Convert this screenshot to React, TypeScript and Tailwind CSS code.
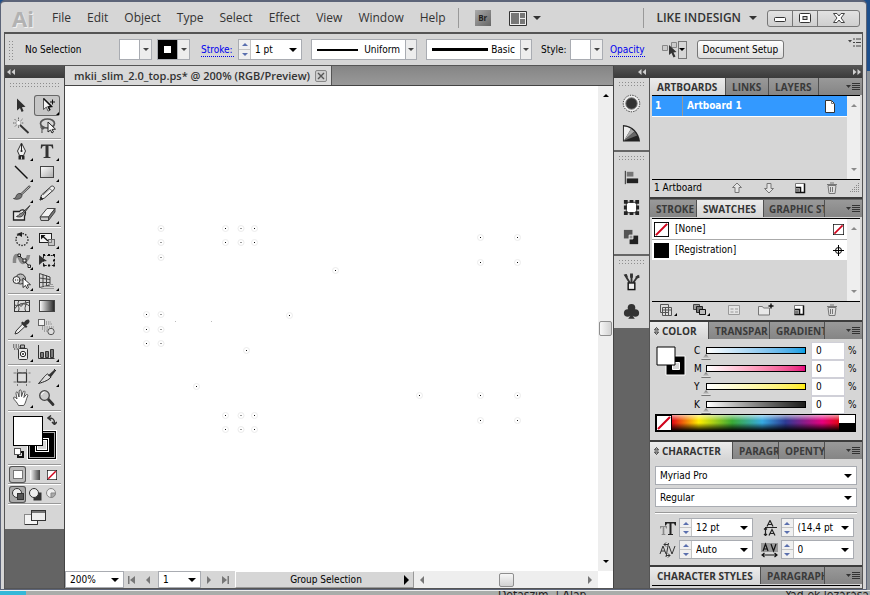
import type { ReactNode } from 'react';

const uiFont = "font-[family-name:'Open_Sans','Noto_Sans',sans-serif]";
const textFont = "font-[family-name:'DejaVu_Sans_Condensed','DejaVu_Sans',sans-serif]";

const menus = ['File', 'Edit', 'Object', 'Type', 'Select', 'Effect', 'View', 'Window', 'Help'];

type Tool = { name: string; flyout?: boolean; active?: boolean; icon: ReactNode };

const toolGroups: Tool[][] = [
  [
    {
      name: 'Selection',
      icon: <path d="M9 3.5v12l3-2.600 1.600 4.100 2-1-1.700-3.700 3.600-.5z" fill="#2f2f2f" />,
    },
    {
      name: 'Group Selection',
      active: true,
      flyout: true,
      icon: (
        <>
          <path d="M9.500 3.500v11l2.800-2.400 1.700 4 2-.9-1.700-3.700 3.200-.5z" fill="#f4f4f4" stroke="#555" />
          <path d="M9.500 3.500l8 8-3.200.5 1.700 3.200" fill="none" stroke="#111" strokeWidth="1.500" />
          <path d="M18.500 4.500v5M16 7h5" stroke="#111" />
        </>
      ),
    },
    {
      name: 'Magic Wand',
      icon: (
        <>
          <path d="M10.500 1.500v11M5 7h11M6.500 3l8 8M14.500 3l-8 8" stroke="#666" strokeDasharray="1.500 .7" />
          <circle cx="10.500" cy="7" r="2" fill="#f5f5f5" />
          <path d="M12 9l8.500 8" stroke="#333" strokeWidth="1.800" />
        </>
      ),
    },
    {
      name: 'Lasso',
      icon: (
        <>
          <ellipse cx="13.500" cy="7.500" rx="7" ry="4.500" fill="none" stroke="#555" strokeWidth="1.700" />
          <path d="M7.500 10c-2 2 2 4 2.500 2s-3-1-2 5" fill="none" stroke="#555" strokeWidth="1.200" />
          <path d="M14 6v10l2.500-2 1.500 3 1.500-1-1.400-2.600 3.400-.2z" fill="#f4f4f4" stroke="#222" />
        </>
      ),
    },
  ],
  [
    {
      name: 'Pen',
      flyout: true,
      icon: (
        <>
          <path d="M13.500 2l-4 8 2 4.500h4l2-4.500z" fill="#eee" stroke="#333" />
          <path d="M13.500 3v7" stroke="#222" />
          <circle cx="13.500" cy="10" r="1.100" fill="#222" />
          <path d="M10.500 14.500h6v4h-6z" fill="#222" />
          <path d="M13.500 15.500v3" stroke="#ccc" />
        </>
      ),
    },
    {
      name: 'Type',
      flyout: true,
      icon: (
        <path
          d="M7 3.500h12l.3 4h-1l-.9-2.300-2.900-.5v11l2 .6v.7H9.500v-.7l2-.6v-11l-2.900.5L7.700 7.500h-1z"
          fill="#333"
        />
      ),
    },
    { name: 'Line Segment', flyout: true, icon: <path d="M7 4l12.500 12.500" stroke="#111" strokeWidth="1.400" /> },
    {
      name: 'Rectangle',
      flyout: true,
      icon: <rect x="6.500" y="4.500" width="13" height="11" fill="url(#light)" stroke="#444" />,
    },
    {
      name: 'Paintbrush',
      flyout: true,
      icon: (
        <>
          <path d="M22 3L12.500 12" stroke="#444" strokeWidth="2.400" />
          <path d="M21.500 3.500L13 11.500" stroke="#ddd" strokeWidth=".8" />
          <path d="M12.500 10.500c-3-.5-4 1.500-4.500 3s-1.500 2-2.500 2c2.500 1.500 8 1 8.500-3z" fill="#777" stroke="#222" strokeWidth=".7" />
        </>
      ),
    },
    {
      name: 'Pencil',
      flyout: true,
      icon: (
        <>
          <path d="M6 17l1.500-5L17 3.500c2-1.500 4.500 1 3 3L10.500 15z" fill="#eee" stroke="#333" />
          <path d="M6 17l1-3 2 2z" fill="#222" stroke="#333" />
          <path d="M15 5l4 3.500M9 12l7-6.500" stroke="#777" />
        </>
      ),
    },
    {
      name: 'Blob Brush',
      icon: (
        <>
          <path d="M5.500 7.500h6c2-3 6-1.500 6 1s-1 3.500-1 4v3.500h-11z" fill="#e8e8e8" stroke="#222" strokeWidth="1.300" />
          <path d="M22 1.500l-8 7.500c-3 0-3 3-5.500 3.500 3 1 6.500.5 7-2.500z" fill="#888" stroke="#222" strokeWidth=".8" />
        </>
      ),
    },
    {
      name: 'Eraser',
      flyout: true,
      icon: (
        <>
          <path d="M6 13l7-8.500h8L14.500 13z" fill="#f2f2f2" stroke="#444" />
          <path d="M6 13h8.500v3.500H7z" fill="#ccc" stroke="#444" />
          <path d="M14.500 16.500V13L21 4.500V8z" fill="#777" stroke="#444" />
        </>
      ),
    },
  ],
  [
    {
      name: 'Rotate',
      flyout: true,
      icon: (
        <>
          <circle cx="14" cy="10.500" r="6" fill="none" stroke="#222" strokeWidth="1.300" strokeDasharray="1.500 1.300" />
          <path d="M8.500 5l5.500-2v5z" fill="#222" />
        </>
      ),
    },
    {
      name: 'Scale',
      flyout: true,
      icon: (
        <>
          <rect x="5.500" y="4.500" width="12" height="9" fill="#f4f4f4" stroke="#222" />
          <rect x="14.500" y="10.500" width="6" height="6" fill="#bbb" fillOpacity=".6" stroke="#666" />
          <path d="M8.500 7l5.500 5" stroke="#111" strokeWidth="1.300" />
          <path d="M7 6h4.500L7 10.500z" fill="#111" />
        </>
      ),
    },
    {
      name: 'Warp',
      flyout: true,
      icon: (
        <>
          <path d="M6.500 13C6 4 10 4 11.500 8s3 6 6 3 3-6 3-6" fill="none" stroke="#888" strokeWidth="3.500" />
          <path d="M11 5l11 12" stroke="#111" />
          <path d="M10 4h2.500v2.500H10zM15 9h3v3h-3zM20 15h2.500v2.500H20z" fill="#eee" stroke="#111" strokeWidth=".9" />
        </>
      ),
    },
    {
      name: 'Free Transform',
      icon: (
        <>
          <path d="M5 5v10l4-3.500 4-.5z" fill="#333" />
          <rect x="9.500" y="5.500" width="11" height="10" fill="none" stroke="#222" strokeDasharray="2 1.600" />
          <path d="M9 4h2v2H9zM14 4h2v2h-2zM19 4h2v2h-2zM19 9.500h2v2h-2zM19 14.500h2v2h-2zM14 14.500h2v2h-2zM9 14.500h2v2H9z" fill="#111" />
        </>
      ),
    },
    {
      name: 'Shape Builder',
      flyout: true,
      icon: (
        <>
          <circle cx="12.500" cy="8" r="5" fill="#bbb" stroke="#333" />
          <circle cx="8.500" cy="9" r="3.500" fill="#eee" stroke="#333" />
          <path d="M7 9h9" stroke="#111" strokeDasharray="1 1.200" />
          <path d="M15 7v9.500l2.500-2 1.500 3 1.500-1-1.400-2.600 3.400-.2z" fill="#fff" stroke="#222" strokeWidth=".9" />
        </>
      ),
    },
    {
      name: 'Perspective Grid',
      flyout: true,
      icon: (
        <>
          <path d="M5.500 2.500v14M9 3.500v12M12.500 4.500v10.500M16 6v8M5.500 2.500l10.500 3.500M5.500 7l10.500 1.500M5.500 11.500h10.500M5.500 16.500l10.500-2.500" fill="none" stroke="#444" />
          <path d="M10 15.500h10M14 13.500h5M7 17.500h13" stroke="#999" />
        </>
      ),
    },
  ],
  [
    {
      name: 'Mesh',
      icon: (
        <>
          <rect x="6.500" y="4.500" width="15" height="11" fill="#ddd" stroke="#333" />
          <path d="M6.500 9c5 2 9-4 15 1M11 4.500c-3 5 2 7-1 11M17 4.500c3 4-2 7 1 11M6.500 13c4-6 8-5 15-7" fill="none" stroke="#444" />
          <circle cx="13" cy="9" r="1.200" fill="#fff" stroke="#444" />
        </>
      ),
    },
    {
      name: 'Gradient',
      icon: <rect x="5.500" y="4.500" width="15" height="11" fill="url(#dark)" stroke="#444" />,
    },
    {
      name: 'Eyedropper',
      flyout: true,
      icon: (
        <>
          <path d="M7 17l1-3 6.500-7 2.500 2.500-7 6.500z" fill="#eee" stroke="#333" />
          <path d="M13 6l5 5 1.500-1.500-1.500-1.500c4-1.500 4-4 3-5s-3.500 0-5 2.500L14.500 4.500z" fill="#333" />
        </>
      ),
    },
    {
      name: 'Blend',
      icon: (
        <>
          <rect x="4.500" y="2.500" width="6" height="6" fill="#f2f2f2" stroke="#666" />
          <path d="M12 5h5M12 7h6M8 10h12M8 12h6M10 14h4" stroke="#666" strokeDasharray="1 1.300" />
          <circle cx="17" cy="14.500" r="3.200" fill="#ddd" stroke="#555" />
        </>
      ),
    },
  ],
  [
    {
      name: 'Symbol Sprayer',
      flyout: true,
      icon: (
        <>
          <path d="M5 3h6M5 5h7M6 7h4" stroke="#222" strokeWidth="1.200" strokeDasharray="1.300 1.300" />
          <path d="M12.500 3h4v3h-4z" fill="#bbb" stroke="#333" />
          <rect x="10.500" y="6.500" width="9" height="11" rx="1" fill="#e8e8e8" stroke="#333" />
          <circle cx="15" cy="12" r="2.700" fill="#fff" stroke="#222" />
          <circle cx="15" cy="12" r="1" fill="#222" />
        </>
      ),
    },
    {
      name: 'Column Graph',
      flyout: true,
      icon: (
        <>
          <path d="M4.500 3v13.500h16" fill="none" stroke="#333" />
          <path d="M6.500 10.500h3v5h-3zM11.500 9.500h3v6h-3zM16.500 7.500h3v8h-3z" fill="#777" stroke="#333" />
        </>
      ),
    },
  ],
  [
    {
      name: 'Artboard',
      icon: (
        <>
          <path d="M9.500 2v17M18.500 2v17M5.500 6h17M5.500 15h17" stroke="#777" strokeDasharray="3 2" />
          <rect x="9.500" y="6" width="9" height="9" fill="#ddd" stroke="#333" strokeWidth="1.200" />
        </>
      ),
    },
    {
      name: 'Slice',
      flyout: true,
      icon: (
        <>
          <path d="M4.500 16.500C8 13 11 8 13.500 7l3.500 3c-2 3-7 5-12.500 6.500z" fill="#ddd" stroke="#222" />
          <path d="M14 8.500l6-5.500 2 .5L17 10z" fill="#333" />
          <path d="M20 2l2 2" stroke="#222" />
        </>
      ),
    },
    {
      name: 'Hand',
      flyout: true,
      icon: (
        <path
          d="M10.500 17.500c-1-3-5-6-5-7.500s2-1 3.500 1L8 5.500c-.3-2 1.500-2 2-.3l1 3.800.2-6c.2-1.500 2-1.500 2 0l.3 5.500 1.600-4.600c.6-1.500 2.200-1 1.800.6l-1 5 2-2.500c1-1.200 2.500-.3 1.800 1-1.700 3-1.500 6.500-4 9.500z"
          fill="#fff"
          stroke="#444"
          strokeWidth=".9"
        />
      ),
    },
    {
      name: 'Zoom',
      icon: (
        <>
          <path d="M14 11l5 5.500" stroke="#333" strokeWidth="2.800" strokeLinecap="round" />
          <circle cx="10.500" cy="7.500" r="4.800" fill="#ccc" stroke="#444" strokeWidth="1.300" />
          <path d="M7.500 7a3.500 3.500 0 013-3" stroke="#fff" fill="none" />
        </>
      ),
    },
  ],
];

const Caret = ({ className = '' }: { className?: string }) => (
  <svg viewBox="0 0 8 4" className={`h-1 w-2 shrink-0 ${className}`} aria-hidden="true">
    <path d="M0 0h8L4 4z" fill="currentColor" />
  </svg>
);

const SmallCaret = ({ up }: { up?: boolean }) => (
  <svg viewBox="0 0 6 3" className={`block h-[3px] w-[6px] shrink-0 ${up ? 'rotate-180' : ''}`} aria-hidden="true">
    <path d="M0 0h6L3 3z" fill="currentColor" />
  </svg>
);

const Grip = () => (
  <div className="h-[5px] bg-[radial-gradient(circle,#8d8d8d_0.8px,transparent_1px)] bg-[length:3px_3px]" />
);

const FoldArrows = ({ right }: { right?: boolean }) => (
  <button aria-label="Collapse" className={right ? 'rotate-180' : ''}>
    <svg viewBox="0 0 8 6" className="h-[6px] w-2" fill="#d0d0d0">
      <path d="M3.500 0v6L0 3zM8 0v6L4.500 3z" />
    </svg>
  </button>
);

type ComboProps = { label: string; value: string; className?: string; boxed?: boolean; children?: ReactNode };

function Combo({ label, value, className = '', boxed, children }: ComboProps) {
  return (
    <div className={`flex items-center border border-[#a9acb2] bg-white ${className}`}>
      {children}
      <select
        aria-label={label}
        className={`h-full min-w-0 flex-1 appearance-none bg-transparent outline-none ${boxed ? 'pr-[5px] text-right' : 'pl-1'}`}
      >
        <option>{value}</option>
      </select>
      <span
        className={`pointer-events-none flex h-full items-center justify-center ${
          boxed ? 'w-[11px] border-l border-[#a9acb2] bg-[#ededed] text-[#444]' : 'w-4 text-black'
        }`}
      >
        {boxed ? <SmallCaret /> : <Caret />}
      </span>
    </div>
  );
}

const Stepper = ({ label }: { label: string }) => (
  <span className="flex h-full w-[12px] shrink-0 flex-col border-r border-[#c4c4c4] bg-[#f0f0f0] text-[#5a6fae]">
    <button aria-label={`Increase ${label}`} className="flex flex-1 items-center justify-center border-b border-[#c4c4c4]">
      <SmallCaret up />
    </button>
    <button aria-label={`Decrease ${label}`} className="flex flex-1 items-center justify-center">
      <SmallCaret />
    </button>
  </span>
);

const MenuIcon = () => (
  <svg viewBox="0 0 14 8" className="h-2 w-[14px]">
    <path d="M0 2h5L2.500 5z" fill="#333" />
    <path d="M6 .5h8M6 2.500h8M6 4.500h8M6 6.500h8" stroke="#333" />
  </svg>
);

type Tab = { name: string; className: string; active?: boolean; fold?: boolean };

function PanelTabs({ tabs }: { tabs: Tab[] }) {
  return (
    <div className={`flex h-[17px] bg-linear-to-b from-[#999] to-[#858585] ${uiFont}`}>
      {tabs.map((tab) => (
        <button
          key={tab.name}
          className={`flex items-center overflow-hidden border-r border-[#505050] text-[10px] font-bold whitespace-nowrap ${
            tab.active ? 'bg-linear-to-b from-[#ececec] to-[#d6d6d6] text-[#333]' : 'text-[#3a3a3a]'
          } ${tab.className}`}
        >
          {tab.fold && (
            <svg viewBox="0 0 5 8" className="mr-[3px] h-2 w-[5px] shrink-0" fill="none" stroke="#333">
              <path d="M.5 3l2-2.500 2 2.500zM.5 5l2 2.500L4.500 5z" />
            </svg>
          )}
          {tab.name}
        </button>
      ))}
      <button aria-label="Panel menu" className="ml-auto pr-[2px]">
        <MenuIcon />
      </button>
    </div>
  );
}

const ListScroll = () => (
  <div className="flex w-[13px] flex-col items-center justify-between bg-[#eee] py-2 text-[#8a8a8a]">
    <button aria-label="Scroll up">
      <SmallCaret up />
    </button>
    <button aria-label="Scroll down">
      <SmallCaret />
    </button>
  </div>
);

const NoneSwatch = ({ className }: { className: string }) => (
  <svg viewBox="0 0 16 16" className={className}>
    <rect x=".5" y=".5" width="15" height="15" fill="#fff" stroke="#000" />
    <path d="M2 14L14 2" stroke="#d0021b" strokeWidth="2.200" />
  </svg>
);

const IconButton = ({ label, children }: { label: string; children: ReactNode }) => (
  <button aria-label={label}>
    <svg viewBox="0 0 18 14" className="h-[14px] w-[18px]" fill="none" stroke="#444">
      {children}
    </svg>
  </button>
);

const newPage = (
  <>
    <path d="M4.500 2.500h9v9h-9z" fill="#fff" stroke="#777" />
    <path d="M13.500 2.500v9h-9" stroke="#111" strokeWidth="1.500" />
    <path d="M5 6.500h4.500v4.500" stroke="#111" strokeWidth="1.500" />
    <path d="M5 7.500h3.500v3.500H5z" fill="#777" stroke="none" />
  </>
);

const trash = (
  <>
    <path d="M5 4.500h8l-1 8H6z" fill="#ddd" stroke="#777" />
    <path d="M4 3.500h10M7 2h4M7.500 6v5M9.500 6v5" stroke="#777" />
  </>
);

const MenuBar = () => (
  <header className={`flex h-[30px] items-center border-b-2 border-[#555] pr-[3px] text-[#333] ${uiFont}`}>
    <span className="w-12 pl-2 text-[22px] leading-none font-bold text-[#b2b2b2] [text-shadow:1px_1px_0_#f0f0f0]">Ai</span>
    <nav className="flex gap-4 text-[12px]">
      {menus.map((menu) => (
        <button key={menu}>{menu}</button>
      ))}
    </nav>
    <div className="ml-3 flex items-center border-l border-[#999] py-[2px] pl-4">
      <button className="h-4 w-4 bg-linear-to-br from-[#aaa] to-[#666] text-[8px] font-bold text-[#222]">Br</button>
      <button aria-label="Arrange documents" className="ml-[18px] flex items-center gap-[6px]">
        <svg viewBox="0 0 18 15" className="h-[15px] w-[18px]">
          <path d="M.5.5h17v14H.5z" fill="#eee" stroke="#333" />
          <path d="M2 2h8v11H2zM11 2h5v5h-5zM11 8h5v5h-5z" fill="#777" />
        </svg>
        <Caret />
      </button>
    </div>
    <div className="ml-auto flex items-center border-l border-[#999] py-[2px] pl-3">
      <button className="flex items-center gap-2 text-[12px] leading-4 font-semibold whitespace-nowrap">
        LIKE INDESIGN
        <Caret />
      </button>
    </div>
    <div className="ml-[10px] flex h-[17px] rounded-[3px] border border-[#777] bg-linear-to-b from-[#e2e2e2] to-[#cfcfcf]">
      <button aria-label="Minimize" className="flex w-[25px] items-center justify-center border-r border-[#777]">
        <svg viewBox="0 0 12 5" className="mt-[3px] h-[5px] w-3">
          <rect x=".5" y=".5" width="11" height="4" rx="1" fill="#fff" stroke="#333" />
        </svg>
      </button>
      <button aria-label="Restore" className="flex w-[25px] items-center justify-center border-r border-[#777]">
        <svg viewBox="0 0 12 10" className="h-[10px] w-3">
          <rect x=".5" y=".5" width="11" height="9" rx="1" fill="#fff" stroke="#333" />
          <rect x="4" y="3.500" width="4" height="3" fill="#ccc" stroke="#333" />
        </svg>
      </button>
      <button aria-label="Close" className="flex w-[41px] items-center justify-center">
        <svg viewBox="0 0 12 10" className="h-[10px] w-3">
          <path d="M.5.500h3.500L6 3 8 .5h3.500L8 5l3.500 4.500H8L6 7 4 9.500H.5L4 5z" fill="#fff" stroke="#444" />
        </svg>
      </button>
    </div>
  </header>
);

const ColorPick = ({ label, stroke }: { label: string; stroke?: boolean }) => (
  <button aria-label={label} className="flex h-[21px] w-[33px] border border-[#a9acb2] bg-white">
    <span className="flex h-full flex-1 items-center justify-center">
      {stroke && <span className="h-[17px] w-[17px] border-[5px] border-black bg-white outline-1 outline-black" />}
    </span>
    <span className="flex h-full w-[12px] items-center justify-center border-l border-[#a9acb2] bg-[#ededed] text-[#444]">
      <SmallCaret />
    </span>
  </button>
);

const linkStyle = 'border-b border-dotted border-[#0000ee] leading-[13px] text-[#0000ee]';

const ControlBar = () => (
  <div className="flex h-8 items-center border-b border-[#555] pr-px text-black">
    <div className="ml-[3px] h-5 w-[5px] bg-[radial-gradient(circle,#8d8d8d_0.8px,transparent_1px)] bg-[length:3px_3px]" />
    <span className="w-[106px] pl-3 whitespace-nowrap">No Selection</span>
    <ColorPick label="Fill" />
    <div className="ml-[5px]">
      <ColorPick label="Stroke color" stroke />
    </div>
    <a href="#stroke" className={`ml-[11px] w-[33px] whitespace-nowrap ${linkStyle}`}>
      Stroke:
    </a>
    <Combo label="Stroke weight" value="1 pt" className="ml-1 h-[21px] w-16">
      <Stepper label="stroke weight" />
    </Combo>
    <Combo label="Width profile" value="Uniform" boxed className="ml-[9px] h-[21px] w-[106px]">
      <span className="ml-[5px] h-[2px] w-[41px] bg-black" />
    </Combo>
    <Combo label="Brush" value="Basic" boxed className="ml-[9px] h-[21px] w-[106px]">
      <span className="ml-[5px] h-[3px] w-[56px] bg-black" />
    </Combo>
    <span className="ml-[9px] w-[29px]">Style:</span>
    <ColorPick label="Graphic style" />
    <a href="#opacity" className={`ml-[7px] ${linkStyle}`}>
      Opacity
    </a>
    <div className="ml-[17px] flex items-center">
      <svg viewBox="0 0 16 17" className="h-[17px] w-4">
        <path d="M.5 4.500h5v5h-5zM9.500 1.500h5v5h-5z" fill="#ccc" stroke="#888" />
        <path d="M7 4v10l2.500-2 2 4.500 2-1-2-4 3-.5z" fill="#333" />
      </svg>
      <button aria-label="Select similar" className="flex h-[18px] w-[9px] items-center justify-center border border-[#777]">
        <SmallCaret />
      </button>
    </div>
    <button className="ml-[10px] h-[19px] rounded-[3px] border border-[#777] bg-linear-to-b from-white to-[#ddd] px-[5px] leading-none whitespace-nowrap">
      Document Setup
    </button>
    <button aria-label="Control bar menu" className="mt-1 ml-auto self-start">
      <svg viewBox="0 0 13 9" className="h-[9px] w-[13px]">
        <path d="M0 2h4L2 4.500z" fill="#444" />
        <path d="M5 1h2M5 4.500h2M5 8h2M8 1h5M8 4.500h5M8 8h5" stroke="#444" />
      </svg>
    </button>
  </div>
);

const Rule = () => <div className="mx-[3px] h-[2px] border-b border-white bg-[#999]" />;

const smallTool = 'flex h-[17px] w-[17px] items-center justify-center rounded-[3px]';

function Toolbox() {
  return (
    <aside className="flex w-[60px] shrink-0 flex-col border-r border-[#444] bg-[#646464]">
      <div className="flex h-3 shrink-0 items-center bg-linear-to-b from-[#555] to-[#3a3a3a] pl-[2px]">
        <FoldArrows />
      </div>
      <div className="bg-[#d6d6d6] pt-1">
        <div className="mx-1 mb-[7px]">
          <Grip />
        </div>
        {toolGroups.map((group) => (
          <div key={group[0].name}>
            <div className="ml-[3px] grid w-[52px] grid-cols-2 py-px">
              {group.map((tool) => (
                <button
                  key={tool.name}
                  aria-label={tool.name}
                  className={tool.active ? 'rounded-[3px] bg-[#c6c6c6] inset-ring inset-ring-[#666]' : ''}
                >
                  <svg viewBox="0 0 26 21" className="block h-[21px] w-[26px]" fill="none">
                    <defs>
                      <linearGradient id="light" x1="0" y1="0" x2="1" y2="1">
                        <stop stopColor="#fff" />
                        <stop offset="1" stopColor="#aaa" />
                      </linearGradient>
                      <linearGradient id="dark">
                        <stop stopColor="#fff" />
                        <stop offset="1" stopColor="#222" />
                      </linearGradient>
                    </defs>
                    {tool.icon}
                    {tool.flyout && <path d="M22 20h3v-3z" fill="#000" />}
                  </svg>
                </button>
              ))}
            </div>
            <Rule />
          </div>
        ))}
        <div className="relative h-[52px]">
          <button aria-label="Fill and stroke" className="pt-[4px] pl-2">
            <svg viewBox="0 0 44 44" className="h-[44px] w-[44px]" shapeRendering="crispEdges">
              <path d="M14 14h30v30H14z" fill="#fff" />
              <path d="M15 15h28v28H15z" fill="#000" />
              <path d="M16.500 16.500h25v25h-25z" fill="none" stroke="#aaa" />
              <path d="M22.500 22.500h13v13h-13z" fill="none" stroke="#fff" />
              <path d="M24.500 24.500h9v9h-9z" fill="#d6d6d6" stroke="#fff" />
              <path d="M.5.500h29v29H.5z" fill="#fff" stroke="#000" />
            </svg>
          </button>
          <button aria-label="Swap fill and stroke" className="absolute top-[3px] right-[7px]">
            <svg viewBox="0 0 10 10" className="block h-[10px] w-[10px]" fill="none" stroke="#333" strokeWidth="1.500">
              <path d="M2 3c4 0 5.500 1 5.500 5M4 .5L1 3l3 2.500M5 7l2.500 2.500L10 7" />
            </svg>
          </button>
          <button aria-label="Default fill and stroke" className="absolute bottom-[5px] left-[9px]">
            <svg viewBox="0 0 11 11" className="block h-[11px] w-[11px]">
              <rect x="4" y="4" width="5" height="5" fill="none" stroke="#111" strokeWidth="2" />
              <rect x=".5" y=".5" width="6" height="6" fill="#fff" stroke="#555" />
            </svg>
          </button>
        </div>
        <Rule />
        <div className="flex h-[17px] items-center px-[4px]">
          <button aria-label="Color" className={`${smallTool} bg-[#bbb] inset-ring inset-ring-[#555]`}>
            <span className="h-[9px] w-[10px] border border-[#777] bg-white" />
          </button>
          <button aria-label="Gradient fill" className={smallTool}>
            <span className="h-[10px] w-[10px] bg-linear-to-r from-white to-[#444]" />
          </button>
          <button aria-label="None" className={smallTool}>
            <NoneSwatch className="h-[10px] w-[10px]" />
          </button>
        </div>
        <Rule />
        <div className="flex h-[18px] items-center px-[4px]">
          {['Draw Normal', 'Draw Behind', 'Draw Inside'].map((mode, i) => (
            <button key={mode} aria-label={mode} className={`${smallTool} ${i === 0 ? 'bg-[#aaa] inset-ring inset-ring-[#555]' : ''}`}>
              <svg viewBox="0 0 14 14" className="h-[14px] w-[14px]" stroke="#333">
                {i === 1 && <rect x="6" y="6" width="7" height="7" fill="#333" />}
                <circle cx="6" cy="6" r="4.500" fill="#eee" stroke={i === 2 ? '#888' : '#333'} />
                {i === 0 && <rect x="6.500" y="6.500" width="6" height="6" fill="#555" />}
                {i === 2 && <path d="M6 6h4.500a4.500 4.500 0 01-4.500 4.500z" fill="#aaa" stroke="#888" />}
              </svg>
            </button>
          ))}
        </div>
        <Rule />
        <button aria-label="Screen mode" className="flex h-6 w-full items-center justify-center">
          <svg viewBox="0 0 22 17" className="h-[17px] w-[22px]" stroke="#333">
            <rect x=".5" y="5.500" width="13" height="10" fill="#f4f4f4" stroke="#888" />
            <rect x="7.500" y="1.500" width="14" height="10" fill="#eee" />
            <path d="M8 3h13" stroke="#777" strokeWidth="2" />
            <path d="M1 15.500h12.500v-4" fill="none" />
          </svg>
        </button>
      </div>
    </aside>
  );
}

// anchor points visible on the artboard, as [x, y]
const anchors = [
  [225, 228], [254, 228], [225, 242], [254, 242], [480, 237], [517, 237], [480, 262], [517, 262], [146, 314],
  [146, 329], [146, 343], [225, 415], [254, 415], [225, 429], [254, 429], [419, 395], [480, 395], [517, 395],
  [480, 420], [517, 420], [335, 270], [289, 315], [246, 350], [196, 386],
];

// these fall between two pixels and look grey
const softAnchors = [
  [160, 228], [160, 242], [160, 257], [160, 314], [160, 329], [160, 343], [240, 228], [240, 242], [240, 415],
  [240, 429],
];

const faintAnchors = [
  [175, 321],
  [211, 321],
];

const arrowButton = 'flex w-4 items-center justify-center text-[#777]';

const NavArrow = ({ label, d }: { label: string; d: string }) => (
  <button aria-label={label} className={arrowButton}>
    <svg viewBox="0 0 8 8" className="h-2 w-2" fill="currentColor">
      <path d={d} />
    </svg>
  </button>
);

function DocumentArea() {
  return (
    <main className="flex min-w-0 flex-1 flex-col">
      <div className={`flex h-5 shrink-0 border-b border-[#444] bg-linear-to-b from-[#858585] to-[#999] ${uiFont}`}>
        <div className="flex items-center gap-[5px] border-r border-[#555] bg-[#d9d9d9] pr-1 pl-[9px]">
          <h1 className="text-[11px] font-semibold whitespace-nowrap text-[#333]">
            mkii_slim_2.0_top.ps* @ 200% (RGB/Preview)
          </h1>
          <button aria-label="Close document" className="rounded-[2px] border border-[#888] bg-[#ccc]">
            <svg viewBox="0 0 10 10" className="h-[10px] w-[10px]" stroke="#555" strokeWidth="1.400">
              <path d="M2 2l6 6M8 2l-6 6" />
            </svg>
          </button>
        </div>
      </div>
      <div className="flex min-h-0 flex-1 bg-white">
        <div className="min-w-0 flex-1 overflow-hidden">
          <svg viewBox="65 86 533 486" className="h-[486px] w-[533px]">
            {anchors.map(([x, y]) => (
              <g key={`${x}-${y}`}>
                <circle cx={x + 0.5} cy={y + 0.5} r="3" fill="none" stroke="#ececec" />
                <rect x={x} y={y} width="1" height="1" fill="#111" />
              </g>
            ))}
            {softAnchors.map(([x, y]) => (
              <g key={`${x}-${y}`}>
                <circle cx={x + 1} cy={y + 0.5} r="3" fill="none" stroke="#ececec" />
                <rect x={x} y={y} width="2" height="1" fill="#999" />
              </g>
            ))}
            {faintAnchors.map(([x, y]) => (
              <rect key={x} x={x} y={y} width="1" height="1" fill="#bbb" />
            ))}
          </svg>
        </div>
        <div className="flex w-[15px] flex-col items-center bg-[#eee] py-2">
          <button aria-label="Scroll up">
            <SmallCaret up />
          </button>
          <div className="flex flex-1 items-center">
            <div className="h-[15px] w-[13px] rounded-[2px] border border-[#8e8e8e] bg-linear-to-r from-[#f7f7f7] to-[#d2d2d2]" />
          </div>
          <button aria-label="Scroll down">
            <SmallCaret />
          </button>
        </div>
      </div>
      <div className="flex h-[17px] shrink-0 bg-[#d6d6d6]">
        <Combo label="Zoom level" value="200%" className="w-[59px]" />
        <NavArrow label="First artboard" d="M0 0h1.500v8H0zM7 0v8L2 4z" />
        <NavArrow label="Previous artboard" d="M6 0v8L2 4z" />
        <Combo label="Artboard" value="1" className="ml-[2px] w-[43px]" />
        <NavArrow label="Next artboard" d="M2 0v8l4-4z" />
        <NavArrow label="Last artboard" d="M6.500 0H8v8H6.500zM1 0v8l5-4z" />
        <button className="ml-[2px] flex w-[179px] items-center border border-[#999] border-t-white border-l-white pr-1 leading-none">
          <span className="flex-1 pl-3">Group Selection</span>
          <svg viewBox="0 0 5 10" className="h-[10px] w-[5px]">
            <path d="M0 0v10l5-5z" />
          </svg>
        </button>
        <div className="flex flex-1 items-center bg-[#eee]">
          <NavArrow label="Scroll left" d="M6 0v8L2 4z" />
          <div className="flex flex-1 justify-center">
            <div className="h-[14px] w-[15px] rounded-[2px] border border-[#8e8e8e] bg-linear-to-b from-[#f7f7f7] to-[#d2d2d2]" />
          </div>
          <NavArrow label="Scroll right" d="M2 0v8l4-4z" />
        </div>
        <div className="w-[15px] bg-white" />
      </div>
    </main>
  );
}

const dockGroups: { name: string; icon: ReactNode }[][] = [
  [
    {
      name: 'Appearance',
      icon: (
        <>
          <circle cx="10" cy="10" r="8.700" fill="#eee" stroke="#222" strokeDasharray="1.300 1.300" />
          <circle cx="10" cy="10" r="6" fill="#333" stroke="#777" />
        </>
      ),
    },
    {
      name: 'Color Guide',
      icon: (
        <>
          <path d="M1 1v17.500h18C18 9 11 1.500 1 1z" fill="#222" />
          <path d="M2 17.500L2 2.500l3.500.6zM2 17.500L5.500 3.100l4 2z" fill="#eee" />
          <path d="M2 17.500L9.500 5l3.500 3z" fill="#aaa" />
          <path d="M2 17.500l11-9.500 3 4z" fill="#666" />
        </>
      ),
    },
  ],
  [
    {
      name: 'Align',
      icon: (
        <>
          <path d="M3.500 3v14" stroke="#222" />
          <path d="M5 4h7v5H5z" fill="#777" />
          <path d="M5 11h12v5H5z" fill="#222" />
        </>
      ),
    },
    {
      name: 'Transform',
      icon: (
        <>
          <rect x="4.500" y="4.500" width="11" height="11" fill="#fff" stroke="#333" />
          <path d="M2 2h4v4H2zM8 2h4v3H8zM14 2h4v4h-4zM2 8h3v4H2zM15 8h3v4h-3zM2 14h4v4H2zM8 15h4v3H8zM14 14h4v4h-4z" fill="#222" />
        </>
      ),
    },
    {
      name: 'Pathfinder',
      icon: (
        <>
          <path d="M2 2h9v9H2z" fill="#555" />
          <path d="M8 8h9v9H8z" fill="#222" />
          <path d="M7.500 7.500h4v4h-4z" fill="#999" stroke="#eee" />
        </>
      ),
    },
  ],
  [
    {
      name: 'Brushes',
      icon: (
        <>
          <path d="M8 11L3 3M10 11V3M12 11l5-7" stroke="#333" strokeWidth="2" />
          <path d="M1.500 3l3.500-1 1.500 4zM8.500 1.500h3V6h-3zM14 5l4-2 .5 3-3.500 1z" fill="#333" />
          <rect x="6.500" y="11.500" width="7" height="7" fill="#eee" stroke="#111" strokeWidth="1.500" />
        </>
      ),
    },
    {
      name: 'Symbols',
      icon: (
        <>
          <circle cx="10" cy="6" r="4" fill="#333" />
          <circle cx="6" cy="11.500" r="4" fill="#333" />
          <circle cx="14" cy="11.500" r="4" fill="#333" />
          <path d="M9 9h2l.5 6 2 2.500h-7l2-2.500z" fill="#333" />
        </>
      ),
    },
  ],
];

const Dock = () => (
  <div className="w-[36px] shrink-0 border-r border-[#555]">
    {dockGroups.map((group) => (
      <div key={group[0].name} className="border-b-2 border-[#666] bg-[#d6d6d6] pt-[3px] pb-[2px]">
        <div className="mx-1 mb-[2px]">
          <Grip />
        </div>
        {group.map((item) => (
          <button key={item.name} aria-label={item.name} className="flex h-[30px] w-full items-center justify-center">
            <svg viewBox="0 0 20 20" className="h-[19px] w-[19px]">
              {item.icon}
            </svg>
          </button>
        ))}
      </div>
    ))}
  </div>
);

const ArtboardsPanel = () => (
  <section>
    <PanelTabs
      tabs={[
        { name: 'ARTBOARDS', className: 'w-[76px] pl-[7px]', active: true },
        { name: 'LINKS', className: 'w-[43px] pl-[6px]' },
        { name: 'LAYERS', className: 'w-[50px] pl-[6px]' },
      ]}
    />
    <div className="mx-[2px] flex h-[85px] border-y border-black">
      <div className="flex-1">
        <button className="flex h-[21px] w-full items-center border-b border-white bg-[#3399ff] text-left font-bold text-white">
          <span className="flex h-full w-[31px] items-center border-r border-[#999] pl-[3px]">1</span>
          <span className="flex-1 pl-1">Artboard 1</span>
          <svg viewBox="0 0 10 13" className="mr-3 h-[13px] w-[10px]">
            <path d="M.5.500h6l3 3v9h-9z" fill="#fff" stroke="#333" />
            <path d="M6.500.5v3h3" fill="none" stroke="#777" />
          </svg>
        </button>
      </div>
      <ListScroll />
    </div>
    <div className="flex h-[17px] items-center pb-[2px] pl-1">
      <span className="w-[74px] whitespace-nowrap">1 Artboard</span>
      <div className="flex flex-1 justify-between pr-[9px]">
        <IconButton label="Move up">
          <path d="M9 2l4.500 4.500H11v5H7v-5H4.500z" fill="#e4e4e4" stroke="#777" />
        </IconButton>
        <IconButton label="Move down">
          <path d="M9 12l4.500-4.500H11v-5H7v5H4.500z" fill="#e4e4e4" stroke="#777" />
        </IconButton>
        <IconButton label="New artboard">{newPage}</IconButton>
        <IconButton label="Delete artboard">{trash}</IconButton>
      </div>
      <svg viewBox="0 0 10 10" className="mr-[2px] h-[10px] w-[10px]" fill="#888">
        <path d="M8 0h1v1H8zM6 2h1v1H6zM8 2h1v1H8zM4 4h1v1H4zM6 4h1v1H6zM8 4h1v1H8zM2 6h1v1H2zM4 6h1v1H4zM6 6h1v1H6zM8 6h1v1H8zM0 8h1v1H0zM2 8h1v1H2zM4 8h1v1H4zM6 8h1v1H6zM8 8h1v1H8z" />
      </svg>
    </div>
  </section>
);

const SwatchesPanel = () => (
  <section>
    <PanelTabs
      tabs={[
        { name: 'STROKE', className: 'w-[47px] pl-[6px]' },
        { name: 'SWATCHES', className: 'w-[67px] pl-[6px]', active: true },
        { name: 'GRAPHIC ST', className: 'w-[61px] pl-[5px]' },
      ]}
    />
    <div className="mx-[2px] mt-px flex h-[84px] border-y border-black">
      <ul className="flex-1">
        <li className="flex h-[21px] items-center gap-[6px] border-b border-[#aaa] bg-white pr-[3px] pl-[2px]">
          <NoneSwatch className="h-[15px] w-[15px]" />
          <span className="flex-1">[None]</span>
          <NoneSwatch className="h-[11px] w-[11px]" />
        </li>
        <li className="flex h-[20px] items-center gap-[6px] bg-white pr-[3px] pl-[2px]">
          <span className="h-[15px] w-[15px] bg-black" />
          <span className="flex-1">[Registration]</span>
          <svg viewBox="0 0 11 11" className="h-[11px] w-[11px]" fill="none" stroke="#000">
            <path d="M5.500 0v11M0 5.500h11" />
            <circle cx="5.500" cy="5.500" r="3" />
          </svg>
        </li>
      </ul>
      <ListScroll />
    </div>
    <div className="flex h-[18px] items-center justify-between pr-[21px] pb-[2px] pl-[9px]">
      <IconButton label="Swatch libraries">
        <path d="M1.500 1.500h8v8h-8zM3.500 4.500h9v8h-9zM3.500 7h9M6.500 4.500v8M9.500 4.500v8" fill="#ddd" stroke="#555" />
        <path d="M15 13h3v-3z" fill="#000" stroke="none" />
      </IconButton>
      <IconButton label="Swatch kinds">
        <path d="M1.500 1.500h6v5h-6z" fill="#999" />
        <path d="M4.500 3.500h6v6h-6z" fill="#777" stroke="#222" />
        <path d="M7.500 6.500h6v5h-6z" fill="#bbb" stroke="#111" />
        <path d="M15 13h3v-3z" fill="#000" stroke="none" />
      </IconButton>
      <IconButton label="Swatch options">
        <path d="M3.500 2.500h11v9h-11zM5.500 6h3M10 6h3M5.500 9h3M10 9h3" fill="#e4e4e4" stroke="#999" />
      </IconButton>
      <IconButton label="New color group">
        <path d="M1.500 3.500h4l1 1.500h6v7h-11z" fill="#e8e8e8" stroke="#777" />
        <path d="M14 .5v5M11.500 3h5" stroke="#111" strokeWidth="1.400" />
      </IconButton>
      <IconButton label="New swatch">{newPage}</IconButton>
      <IconButton label="Delete swatch">{trash}</IconButton>
    </div>
  </section>
);

const channels = [
  { name: 'C', bar: 'bg-linear-to-r from-white to-[#009fe3]' },
  { name: 'M', bar: 'bg-linear-to-r from-white to-[#e6007e]' },
  { name: 'Y', bar: 'bg-linear-to-r from-white to-[#ffed00]' },
  { name: 'K', bar: 'bg-linear-to-r from-white to-[#1d1d1b]' },
];

const ColorPanel = () => (
  <section>
    <PanelTabs
      tabs={[
        { name: 'COLOR', className: 'w-[59px] pl-1', active: true, fold: true },
        { name: 'TRANSPAR', className: 'w-[61px] pl-[6px]' },
        { name: 'GRADIENT', className: 'w-[55px] pl-[6px]' },
      ]}
    />
    <div className="flex pt-[3px]">
      <svg viewBox="0 0 30 30" className="mt-1 ml-[6px] h-[30px] w-[30px]">
        <path d="M10 10h19v19H10z" fill="#000" stroke="#fff" />
        <path d="M16.500 16.500h7v7h-7z" fill="#d6d6d6" stroke="#fff" />
        <path d="M1 1h18v18H1z" fill="#fff" stroke="#000" />
      </svg>
      <div className="ml-[8px] flex-1">
        {channels.map(({ name, bar }) => (
          <div key={name} className="flex h-[18px] items-center">
            <label htmlFor={`slider-${name}`} className="w-[7px]">
              {name}
            </label>
            <div className="grid h-full flex-1">
              <div className={`col-start-1 row-start-1 mx-[5px] mt-[5px] h-[7px] border border-black ${bar}`} />
              <input
                id={`slider-${name}`}
                type="range"
                defaultValue={0}
                className="col-start-1 row-start-1 mt-[12px] h-[6px] w-full appearance-none bg-transparent [&::-webkit-slider-thumb]:h-[6px] [&::-webkit-slider-thumb]:w-[10px] [&::-webkit-slider-thumb]:appearance-none [&::-webkit-slider-thumb]:border-b [&::-webkit-slider-thumb]:border-[#777] [&::-webkit-slider-thumb]:bg-linear-to-b [&::-webkit-slider-thumb]:from-[#666] [&::-webkit-slider-thumb]:to-[#eee] [&::-webkit-slider-thumb]:[clip-path:polygon(50%_0,100%_100%,0_100%)]"
              />
            </div>
            <input
              aria-label={`${name} value`}
              defaultValue="0"
              className="h-[18px] w-[34px] border border-[#d0d0d8] bg-white pb-px pl-1 outline-none"
            />
            <span className="w-[17px] pl-[3px]">%</span>
          </div>
        ))}
      </div>
    </div>
    <div className="mr-[6px] mb-2 ml-[5px] flex h-[18px] border border-black">
      <NoneSwatch className="h-4 w-4" />
      <div className="flex-1 bg-[linear-gradient(to_bottom,#fff9,transparent_35%,transparent_50%,#000),linear-gradient(to_right,#e30613,#ffed00_16%,#3aaa35_36%,#36a9e1_54%,#2d3a93_68%,#e6007e_90%,#e30613)]" />
      <div className="w-4 bg-linear-to-b from-white from-50% to-black to-50%" />
    </div>
  </section>
);

const typeFields = [
  {
    name: 'Font size',
    value: '12 pt',
    icon: (
      <>
        <path d="M1 6h7v2.500H7L6.500 7H5.300v7h1v1H2.700v-1h1V7H2.500L2 8.500H1z" fill="#888" />
        <path d="M6 2h11v3.500h-1L15 3.500h-2.500V14H14v1H9v-1h1.500V3.500H8L7 5.500H6z" fill="#222" />
      </>
    ),
  },
  {
    name: 'Leading',
    value: '(14,4 pt',
    icon: (
      <path d="M6 6.500L9 .5l3 6M7 4.500h4M4 7.500h12M8 15.500l3-6 3 6M9 13.500h4M4.500 8v7M3 9.500L4.500 8 6 9.500M3 14l1.500 1.500L6 14" fill="none" stroke="#222" strokeWidth="1.200" />
    ),
  },
  {
    name: 'Kerning',
    value: 'Auto',
    icon: (
      <path d="M1 12l3-8 3 8M2 9h4M10 4l3 8 3-8M9.500 1L7 15M5 2.500h4M7 .5l-2 2 2 2M7 13.500h4M9 11.500l2 2-2 2" fill="none" stroke="#333" />
    ),
  },
  {
    name: 'Tracking',
    value: '0',
    icon: (
      <>
        <path d="M0 1h17v9H0z" fill="#999" />
        <path d="M2 9l2.500-7L7 9M3 7h3M10 2l2.500 7L15 2M1 13h15M3.500 11L1 13l2.500 2M13.500 11l2.500 2-2.500 2" fill="none" stroke="#111" strokeWidth="1.200" />
      </>
    ),
  },
];

const CharacterPanel = () => (
  <section>
    <PanelTabs
      tabs={[
        { name: 'CHARACTER', className: 'w-[83px] pl-1', active: true, fold: true },
        { name: 'PARAGR', className: 'w-[46px] pl-[6px]' },
        { name: 'OPENTY', className: 'w-[46px] pl-[6px]' },
      ]}
    />
    <div className="px-[5px] pt-[7px] pb-[6px]">
      <Combo label="Font family" value="Myriad Pro" className="h-[19px]" />
      <Combo label="Font style" value="Regular" className="mt-[3px] h-[19px]" />
      <div className="mt-[5px] mb-1 h-[2px] border-b border-white bg-[#999]" />
      <div className="grid grid-cols-2 gap-x-1 gap-y-[3px] pr-[3px]">
        {typeFields.map(({ name, value, icon }) => (
          <div key={name} className="flex items-center gap-[3px] pl-[4px]">
            <svg viewBox="0 0 17 16" className="h-4 w-[17px] shrink-0">
              {icon}
            </svg>
            <Combo label={name} value={value} className="h-[19px] min-w-0 flex-1">
              <Stepper label={name} />
            </Combo>
          </div>
        ))}
      </div>
    </div>
  </section>
);

const gap = 'h-[3px] shrink-0 border-b border-[#666] bg-[#3c3c3c]';
const thinGap = 'h-[2px] shrink-0 bg-[#3c3c3c]';

export default function App() {
  return (
    <div className={`flex h-screen flex-col overflow-hidden bg-[#8d9399] text-[10px] leading-4 text-black ${textFont}`}>
      <div className="flex min-h-0 flex-1 bg-linear-to-b from-[#1d4f8c] from-12% to-[#8d9399] to-12% pr-[3px]">
        <div className="flex min-w-0 flex-1 flex-col rounded-t-[5px] border border-t-2 border-[#5c6478] bg-[#d6d6d6] px-[3px] pt-[2px]">
          <MenuBar />
          <div className="flex min-h-0 flex-1 flex-col border-x border-b border-[#555]">
            <ControlBar />
            <div className="flex min-h-0 flex-1">
              <Toolbox />
              <DocumentArea />
              <aside className="flex w-[249px] shrink-0 flex-col border-l border-[#444] bg-[#646464]">
                <div className="flex h-3 shrink-0 items-center justify-between bg-linear-to-b from-[#555] to-[#3a3a3a] pr-px pl-6">
                  <FoldArrows />
                  <FoldArrows right />
                </div>
                <div className="flex min-h-0 flex-1">
                  <Dock />
                  <div className="flex min-w-0 flex-1 flex-col overflow-hidden bg-[#d6d6d6]">
                    <ArtboardsPanel />
                    <div className={gap} />
                    <SwatchesPanel />
                    <div className={thinGap} />
                    <ColorPanel />
                    <div className={thinGap} />
                    <CharacterPanel />
                    <div className={thinGap} />
                    <PanelTabs
                      tabs={[
                        { name: 'CHARACTER STYLES', className: 'w-[111px] pl-[7px]', active: true },
                        { name: 'PARAGRAPH', className: 'w-[64px] pl-[6px]' },
                      ]}
                    />
                    <div className="mx-[2px] mt-px border-t border-black" />
                  </div>
                </div>
              </aside>
            </div>
          </div>
        </div>
      </div>
      <footer className="flex h-[5px] shrink-0 justify-between overflow-hidden border-t border-[#eee] bg-linear-to-r from-[#35b8d8] from-3% to-[#a9adaa] to-3% pr-px pl-[498px] text-[12px] leading-[8px] whitespace-nowrap text-[#222]">
        <span>Détaszim&nbsp; | Alap</span>
        <span>Yad-ék lezárása</span>
      </footer>
    </div>
  );
}
